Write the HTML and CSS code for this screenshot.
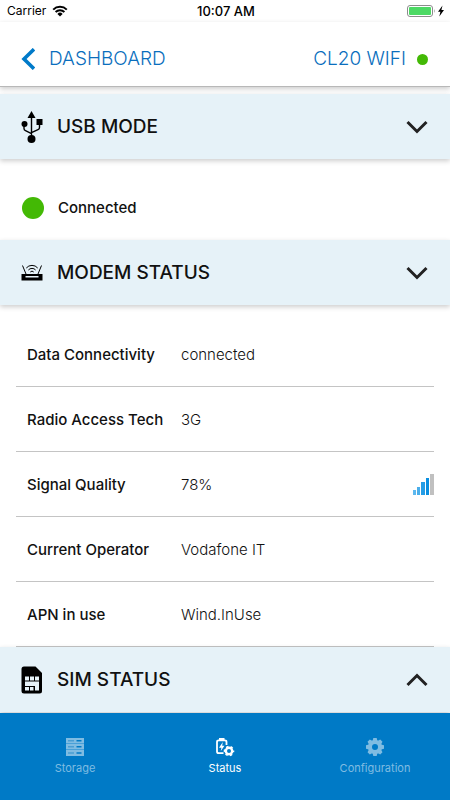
FILE: index.html
```html
<!DOCTYPE html>
<html lang="en">
<head>
<meta charset="utf-8">
<meta name="viewport" content="width=device-width, initial-scale=1">
<title>CL20 WIFI</title>
<link rel="stylesheet" href="styles.css">
</head>
<body>
<div class="status-bar">
  <div class="carrier">
    <span>Carrier</span>
    <svg width="16" height="12" viewBox="0 0 16 12" aria-hidden="true"><path d="M1.2 4.6a9.7 9.7 0 0 1 13.6 0M3.6 7a6.3 6.3 0 0 1 8.8 0" fill="none" stroke="#000" stroke-width="2"/><path d="M5.4 8.9a3.7 3.7 0 0 1 5.2 0L8 11.5z"/></svg>
  </div>
  <time class="clock">10:07 AM</time>
  <div class="battery">
    <svg width="29" height="12" viewBox="0 0 29 12" aria-hidden="true"><rect x=".5" y=".5" width="25" height="11" rx="2.5" fill="#fff" stroke="#8c8c8c"/><rect x="2" y="2" width="22" height="8" rx="1" fill="#4cd964"/><path d="M27 4q1.500 2 0 4z" fill="#8c8c8c"/></svg>
    <svg width="8" height="12" viewBox="0 0 8 12" aria-hidden="true"><path d="M5.500 .5 1 6.800h2.400L2.300 11.500 7 5H4.400z"/></svg>
  </div>
</div>

<header class="header">
  <a class="back" href="#dashboard">
    <svg width="14" height="22" viewBox="0 0 14 22" aria-hidden="true"><path d="M13 1.200 3 11l10 9.800" fill="none" stroke="#007ac9" stroke-width="3.600"/></svg>
    <span>DASHBOARD</span>
  </a>
  <div class="device"><span>CL20 WIFI</span><span class="dot"></span></div>
</header>

<main class="content">
  <section>
    <h2 class="heading"><button class="toggle" type="button" aria-expanded="true">
      <svg class="section-icon" width="22" height="34" viewBox="0 0 22 34" aria-hidden="true"><path d="M10.500 6v22M3 13v5.500q0 1.500 1.500 2.200l6 3M18.500 12v5.500q0 1.500-1.500 2.200l-6.500 3" fill="none" stroke="#000" stroke-width="1.400"/><path d="M10.500 1l4 7h-8z"/><circle cx="3.500" cy="14" r="3"/><path d="M15.500 9h6v6h-6z"/><circle cx="10.500" cy="29" r="4"/></svg>
      <span>USB MODE</span>
      <svg class="chevron" width="22" height="14" viewBox="0 0 22 14" aria-hidden="true"><path d="m1.500 2 9.500 9.500L20.500 2"/></svg>
    </button></h2>
    <div class="connection"><span class="dot dot-large"></span><span>Connected</span></div>
  </section>

  <section>
    <h2 class="heading"><button class="toggle" type="button" aria-expanded="true">
      <svg class="section-icon" width="22" height="18" viewBox="0 0 22 18" aria-hidden="true"><path d="m1.500 1.500 3.500 8.500M20.500 1.500 17 10M5.300 4a7.500 7.500 0 0 1 11.400 0M7.400 6a4.800 4.800 0 0 1 7.200 0M9.300 8a2.300 2.300 0 0 1 3.400 0" fill="none" stroke="#000" stroke-width="1"/><path fill-rule="evenodd" d="M.5 10h21v6.500H.5zM4.500 12v1.500h13V12z"/></svg>
      <span>MODEM STATUS</span>
      <svg class="chevron" width="22" height="14" viewBox="0 0 22 14" aria-hidden="true"><path d="m1.500 2 9.500 9.500L20.500 2"/></svg>
    </button></h2>
    <div class="details">
      <table>
        <tbody>
          <tr><th scope="row">Data Connectivity</th><td>connected</td></tr>
          <tr><th scope="row">Radio Access Tech</th><td>3G</td></tr>
          <tr><th scope="row">Signal Quality</th><td><div class="signal"><span>78%</span>
            <svg width="21" height="21" viewBox="0 0 21 21" aria-hidden="true"><path d="M0 16h3v5H0z" fill="#5cb8ef"/><path d="M4 13h3v8H4z" fill="#4aaeea"/><path d="M8 8h4v13H8z" fill="#259de6"/><path d="M13 4h3v17h-3z" fill="#0a8fe0"/><path d="M17 0h4v21h-4z" fill="#c0c0c0"/></svg></div></td></tr>
          <tr><th scope="row">Current Operator</th><td>Vodafone IT</td></tr>
          <tr><th scope="row">APN in use</th><td>Wind.InUse</td></tr>
        </tbody>
      </table>
    </div>
  </section>

  <section>
    <h2 class="heading"><button class="toggle" type="button" aria-expanded="false">
      <svg class="section-icon" width="22" height="28" viewBox="0 0 22 28" aria-hidden="true"><path d="M3 .5h11.500L21 7v18q0 2.500-2.500 2.500H3Q.5 27.500.5 25V3Q.5.5 3 .5z"/><path d="M4 10.500h4v4H4zM9 10.500h4v4H9zM14 10.500h4v4h-4zM4 15.500h14v9h-4V20H4zM4 21h4v3.500H4zM9 21h3.500v3.500H9z" fill="#e6f2f8"/></svg>
      <span>SIM STATUS</span>
      <svg class="chevron" width="22" height="14" viewBox="0 0 22 14" aria-hidden="true"><path d="m1.500 12 9.500-9.500 9.500 9.500"/></svg>
    </button></h2>
  </section>
</main>

<nav class="tabs" aria-label="Main">
  <a class="tab" href="#storage">
    <svg width="20" height="20" viewBox="0 0 20 20" aria-hidden="true"><path d="M1 1h18v5H1zM1 7h18v5H1zM1 13h18v6H1z" fill="currentColor"/><path d="M1 6.500h18M1 12.500h18" stroke="#48a0d8"/><path d="M3 3.800h6M3 9.800h6M3 16h6" stroke="#4a9ed3" stroke-width="1.500"/><path d="M11.500 3.800h5M11.500 9.800h5M11.500 16h5" stroke="#007ac6" stroke-width="1.500"/></svg>
    <span>Storage</span>
  </a>
  <a class="tab active" href="#status" aria-current="page">
    <svg width="20" height="20" viewBox="0 0 20 20" aria-hidden="true"><path d="M11.500 8V5q0-1.700-1.700-1.700H3.700Q2 3.300 2 5v9.500q0 1.700 1.700 1.700h4.800M4 2h5.500" fill="none" stroke="currentColor" stroke-width="1.800"/><path d="M7.800 5 4 10.700h2.400L5.800 14l3.700-5.300H7.200z" fill="currentColor"/><circle cx="14" cy="14" r="3.200" fill="none" stroke="currentColor" stroke-width="2.400"/><circle cx="14" cy="14" r="4.500" fill="none" stroke="currentColor" stroke-width="1.600" stroke-dasharray="2.400 2.312" stroke-dashoffset="1.200"/></svg>
    <span>Status</span>
  </a>
  <a class="tab" href="#configuration">
    <svg width="20" height="20" viewBox="0 0 20 20" aria-hidden="true"><circle cx="10" cy="10" r="5" fill="none" stroke="currentColor" stroke-width="4"/><path d="M8.300 1h3.400l.7 3H7.600zM8.300 19h3.400l.7-3H7.600zM1 8.300v3.400l3 .7V7.600zM19 8.300v3.400l-3 .7V7.600zM2.500 4.800l2.300-2.300L7.500 4 4 7.500zM17.500 4.800l-2.300-2.300L12.500 4 16 7.500zM2.500 15.200l2.300 2.300L7.500 16 4 12.500zM17.500 15.200l-2.300 2.300-2.700-1.500 3.500-3.500z" fill="currentColor"/></svg>
    <span>Configuration</span>
  </a>
</nav>
</body>
</html>
```
FILE: styles.css
```css
* {
  box-sizing: border-box;
}

body {
  margin: 0;
  min-height: 100vh;
  display: flex;
  flex-direction: column;
  background: #fff;
  color: #111;
  font-family: Inter, "Liberation Sans", sans-serif;
  font-size: 15px;
  line-height: 20px;
}

svg {
  display: block;
  flex: none;
}

a {
  color: inherit;
  text-decoration: none;
}

.status-bar {
  display: grid;
  grid-template-columns: 1fr auto 1fr;
  align-items: center;
  height: 22px;
  padding: 0 5px 0 7px;
  color: #000;
  font-size: 12px;
}

.carrier,
.battery {
  display: flex;
  align-items: center;
  gap: 6px;
}

.battery {
  justify-content: flex-end;
  gap: 1px;
}

.clock {
  font-size: 13px;
  font-weight: 500;
}

.header {
  display: flex;
  align-items: center;
  justify-content: space-between;
  height: 65px;
  padding: 10px 22px 0 21px;
  border-bottom: 1px solid #b8b8b8;
  box-shadow: 0 2px 5px rgba(0, 0, 0, 0.2);
  color: #0a6ebd;
  font-size: 19px;
  font-weight: 300;
}

.back,
.device {
  display: flex;
  align-items: center;
  gap: 14px;
}

.device {
  gap: 11px;
}

.dot {
  width: 11px;
  height: 11px;
  border-radius: 50%;
  background: #43b905;
}

.dot-large {
  width: 22px;
  height: 22px;
}

.content {
  flex: 1;
  padding-top: 7px;
}

.heading {
  margin: 0;
  font-size: 19px;
  font-weight: 500;
}

.toggle {
  display: flex;
  align-items: center;
  gap: 14px;
  width: 100%;
  height: 65px;
  padding: 0 22px 0 21px;
  border: 0;
  background: #e6f2f8;
  box-shadow: 0 2px 5px rgba(0, 0, 0, 0.2);
  color: #111;
  font: inherit;
  text-align: left;
}

.chevron {
  margin-left: auto;
  fill: none;
  stroke: #222;
  stroke-width: 3;
}

.connection {
  display: flex;
  align-items: center;
  gap: 14px;
  height: 81px;
  padding: 16px 22px 0;
  font-weight: 500;
}

.details {
  padding: 17px 16px 0;
}

table {
  width: 100%;
  border-spacing: 0;
}

th,
td {
  height: 65px;
  padding: 1px 0 0;
  border-bottom: 1px solid #c4c4c4;
  text-align: left;
}

th {
  width: 165px;
  padding-left: 11px;
  font-weight: 500;
}

td {
  font-weight: 300;
}

.signal {
  display: flex;
  align-items: center;
  justify-content: space-between;
}

.tabs {
  position: relative;
  display: grid;
  grid-template-columns: repeat(3, 1fr);
  height: 87px;
  background: #007ac6;
  color: #7fbce2;
  font-size: 11px;
  line-height: 14px;
}

.tab {
  display: flex;
  flex-direction: column;
  align-items: center;
  gap: 4px;
  padding-top: 24px;
}

.active {
  color: #fff;
}
```
